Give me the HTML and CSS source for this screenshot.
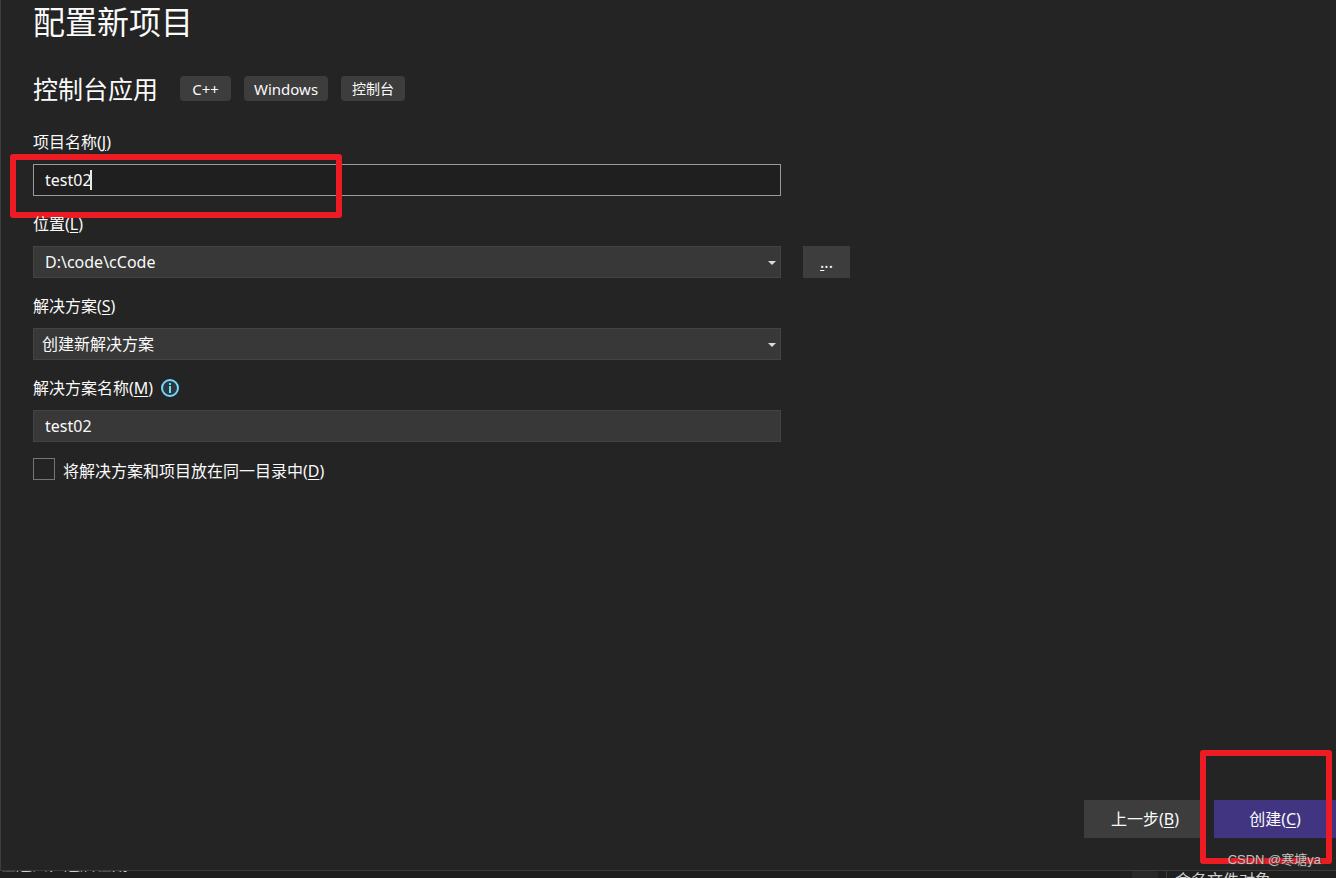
FILE: index.html
```html
<!DOCTYPE html>
<html lang="zh-CN">
<head>
<meta charset="utf-8">
<title>配置新项目</title>
<link rel="stylesheet" href="styles.css">
</head>
<body>
<main class="dialog">
  <h1 class="title">配置新项目</h1>
  <div class="template">
    <h2 class="template-name">控制台应用</h2>
    <ul class="tags">
      <li class="tag tag-latin">C++</li>
      <li class="tag tag-latin">Windows</li>
      <li class="tag">控制台</li>
    </ul>
  </div>
  <form class="form" id="project">
    <div class="field">
      <label class="label" for="name">项目名称(<u>J</u>)</label>
      <div class="control">
        <input class="box box-active" id="name" type="text" value="test02" autocomplete="off" spellcheck="false">
        <span class="caret"></span>
      </div>
      <span class="mark mark-name"></span>
    </div>
    <div class="field">
      <label class="label" for="location">位置(<u>L</u>)</label>
      <div class="row">
        <div class="control">
          <select class="box" id="location"><option>D:\code\cCode</option></select>
          <svg class="arrow" viewBox="0 0 8 4" aria-hidden="true"><path d="M0 0h8L4 4z"/></svg>
        </div>
        <button class="browse" type="button" aria-label="浏览"><u>.</u>..</button>
      </div>
    </div>
    <div class="field">
      <label class="label" for="solution">解决方案(<u>S</u>)</label>
      <div class="control">
        <select class="box box-cjk" id="solution"><option>创建新解决方案</option></select>
        <svg class="arrow" viewBox="0 0 8 4" aria-hidden="true"><path d="M0 0h8L4 4z"/></svg>
      </div>
    </div>
    <div class="field">
      <div class="label-row">
        <label class="label" for="solution-name">解决方案名称(<u>M</u>)</label>
        <svg class="info" viewBox="0 0 18 18" aria-hidden="true"><circle cx="9" cy="9" r="8"/><path d="M8 4h2v2H8zM8 7h2v7H8z"/></svg>
      </div>
      <div class="control">
        <input class="box" id="solution-name" type="text" value="test02" autocomplete="off" spellcheck="false">
      </div>
    </div>
    <div class="check-row">
      <input class="check" id="same-dir" type="checkbox">
      <label class="check-label" for="same-dir">将解决方案和项目放在同一目录中(<u>D</u>)</label>
    </div>
  </form>
  <footer class="actions">
    <button class="action" type="button">上一步(<u>B</u>)</button>
    <button class="action action-primary" type="submit" form="project">创建(<u>C</u>)</button>
    <span class="mark mark-create"></span>
    <span class="watermark">CSDN @寒塘ya</span>
  </footer>
</main>
<div class="behind">
  <div class="pane pane-left">在运田，运后在期</div>
  <div class="scroll"></div>
  <div class="pane pane-right">命名文件对象</div>
</div>
</body>
</html>
```
FILE: styles.css
```css
* {
  box-sizing: border-box;
}

body {
  margin: 0;
  height: 100vh;
  display: flex;
  flex-direction: column;
  overflow: hidden;
  background: #1f1f1f;
  color: #fafafa;
  font: 16px/24px "Noto Sans", "Noto Sans CJK SC", sans-serif;
}

u {
  text-underline-offset: 2px;
}

.dialog {
  flex: 1;
  min-height: 0;
  display: flex;
  flex-direction: column;
  padding-left: 32px;
  background: #242424;
  border-left: 1px solid #3d3d3d;
  border-bottom: 1px solid #3d3d3d;
}

.title {
  margin: 0;
  font-size: 32px;
  line-height: 44px;
  font-weight: 400;
}

.template {
  display: flex;
  align-items: center;
  gap: 22px;
  margin-top: 24px;
}

.template-name {
  margin: 0;
  font-size: 25px;
  line-height: 42px;
  font-weight: 400;
}

.tags {
  display: flex;
  gap: 13px;
  margin: 0;
  padding: 0 0 2px;
  list-style: none;
}

.tag {
  height: 25px;
  padding: 0 11px;
  border-radius: 4px;
  background: #3d3d3d;
  font-size: 14px;
  line-height: 26px;
}

.tag-latin {
  min-width: 51px;
  padding: 0 10px;
  font-size: 15px;
  text-align: center;
}

.form {
  display: flex;
  flex-direction: column;
  gap: 16px;
  width: 100%;
  margin-top: 20px;
}

.field {
  position: relative;
  display: flex;
  flex-direction: column;
  gap: 10px;
}

.label-row {
  display: flex;
  align-items: center;
  gap: 8px;
}

.row {
  display: flex;
  gap: 22px;
}

.control {
  position: relative;
  flex: none;
  width: 748px;
  max-width: 80vw;
}

.box {
  display: block;
  width: 100%;
  height: 32px;
  margin: 0;
  padding: 0 11px;
  border: 1px solid #434343;
  border-radius: 0;
  outline: 0;
  appearance: none;
  background: #383838;
  color: #fafafa;
  font: inherit;
}

.box-active {
  border-color: #999;
  background: #1f1f1f;
}

.box-cjk {
  padding-left: 8px;
}

.caret {
  position: absolute;
  left: 57px;
  top: 6px;
  width: 2px;
  height: 20px;
  background: #e8e8e8;
}

.arrow {
  position: absolute;
  right: 5px;
  top: 15px;
  width: 8px;
  height: 4px;
  fill: #dcdcdc;
  pointer-events: none;
}

.browse {
  width: 47px;
  height: 32px;
  padding: 0;
  border: 0;
  background: #3d3d3d;
  color: #fafafa;
  font: inherit;
}

.info {
  width: 18px;
  height: 18px;
  fill: #75d7fa;
}

.info circle {
  fill: #293940;
  stroke: #75d7fa;
  stroke-width: 2;
}

.check-row {
  display: flex;
  gap: 8px;
}

.check {
  width: 22px;
  height: 22px;
  margin: 0;
  appearance: none;
  border: 1px solid #767676;
  background: #242424;
}

.check-label {
  line-height: 26px;
}

.actions {
  position: relative;
  display: flex;
  justify-content: flex-end;
  gap: 8px;
  margin-top: auto;
  padding-bottom: 32px;
}

.action {
  width: 122px;
  height: 38px;
  padding: 0;
  border: 0;
  background: #3d3d3d;
  color: #fafafa;
  font: inherit;
}

.action-primary {
  background: #413481;
}

.mark {
  position: absolute;
  border: 6px solid #ed1c24;
  border-radius: 3px;
  pointer-events: none;
}

.mark-name {
  left: -23px;
  top: 24px;
  width: 332px;
  height: 64px;
}

.mark-create {
  right: 4px;
  bottom: 6px;
  width: 132px;
  height: 114px;
}

.watermark {
  position: absolute;
  right: 15px;
  bottom: 0;
  color: #c4c0c0;
  font-family: "Liberation Sans", "Noto Sans CJK SC", sans-serif;
  font-size: 13px;
  line-height: 20px;
  text-shadow: 1px 1px 1px #333;
}

.behind {
  display: flex;
  height: 7px;
  overflow: hidden;
  color: #d0d0d0;
}

.pane {
  height: 7px;
  overflow: hidden;
  white-space: nowrap;
}

.pane-left {
  display: flex;
  align-items: flex-end;
  flex: 1;
  padding-bottom: 6px;
  line-height: 16px;
}

.scroll {
  width: 26px;
  background: #292929;
}

.pane-right {
  width: 170px;
  margin-left: 8px;
  padding-left: 8px;
  border-left: 1px solid #3d3d3d;
  line-height: 18px;
}
```
